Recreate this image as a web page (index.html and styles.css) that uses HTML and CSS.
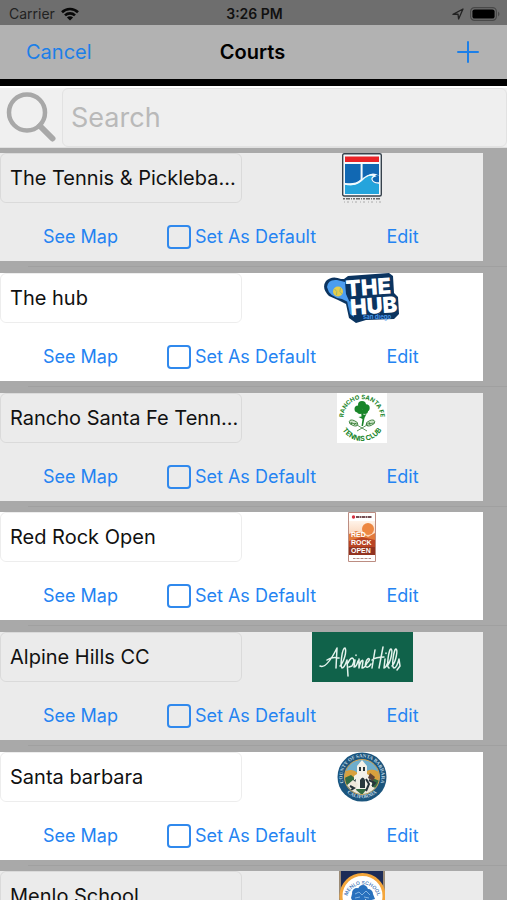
FILE: index.html
```html
<!DOCTYPE html>
<html lang="en">
<head>
<meta charset="utf-8">
<meta name="viewport" content="width=device-width, initial-scale=1">
<title>Courts</title>
<link rel="stylesheet" href="styles.css">
</head>
<body>
<div class="status">
  <div class="status-left">
    <span>Carrier</span>
    <svg width="18" height="14" viewBox="0 0 18 14" aria-hidden="true"><g fill="none" stroke="#080808" stroke-width="2.6"><path d="M1 5.2a11.5 11.5 0 0 1 16 0"/><path d="M4 8.4a7.2 7.2 0 0 1 10 0"/></g><path d="M9 13.6 5.900 10.500a4.400 4.400 0 0 1 6.200 0z" fill="#080808"/></svg>
  </div>
  <time class="clock">3:26 PM</time>
  <div class="status-right">
    <svg width="12" height="12" viewBox="0 0 12 12" aria-hidden="true"><path d="M1 6.400 11 1 6.600 11 6 6.200z" fill="none" stroke="#222" stroke-width="1.300" stroke-linejoin="round"/></svg>
    <svg width="30" height="14" viewBox="0 0 30 14" aria-hidden="true"><rect x=".6" y=".6" width="25.800" height="12.800" rx="4" fill="none" stroke="#494949" stroke-width="1.200"/><rect x="2.400" y="2.400" width="22.200" height="9.200" rx="2.200" fill="#000"/><path d="M28 4.600q3 2.400 0 4.800z" fill="#494949"/></svg>
  </div>
</div>

<header class="nav">
  <button class="cancel" type="button">Cancel</button>
  <h1>Courts</h1>
  <button class="add" type="button" aria-label="Add court"><svg width="22" height="22" viewBox="0 0 22 22"><path d="M11 1v20M1 11h20" stroke="#1c7fe8" stroke-width="2" stroke-linecap="round"/></svg></button>
</header>

<div class="search">
  <label for="search" aria-label="Search"><svg width="50" height="52" viewBox="0 0 50 52"><circle cx="21" cy="20.500" r="18" fill="none" stroke="#a8a8a8" stroke-width="4.500"/><path d="m34 34 12.500 12.500" stroke="#a8a8a8" stroke-width="6" stroke-linecap="round"/></svg></label>
  <input id="search" type="text" placeholder="Search">
</div>

<main class="list">
  <article class="court">
    <div class="top">
      <input class="name" type="text" aria-label="Court name" value="The Tennis &amp; Pickleba..." readonly>
      <svg width="40" height="50" viewBox="0 0 40 50" aria-hidden="true"><rect x=".7" y=".7" width="38.600" height="42.300" rx="1.500" fill="#f4fafd" stroke="#37424c" stroke-width="1.400"/><path d="M3 3.500h34V9H3z" fill="#e92327"/><path d="M3 11h15.600v15.500Q13 31.500 3 30zM20.600 11H37v11.600q-7-4.500-12 .8l-4.400 3.500z" fill="#1168b3"/><path d="M3 31.500c10 2 14-1 19-5.500 4-3.500 7-4.500 11-2-5 1-3 7 4 7V41H3z" fill="#24a4dc"/><path d="M31 24.500c-4 3 1 7 6 6v-8q-4-1.500-6 2" fill="#1168b3"/><path d="M3 31c10 2 14-1 19-6 5-4 8-4 11-2-5 1-4 7 4 7" fill="none" stroke="#eefaff" stroke-width="1.300"/><path d="M1 45.800h38" stroke="#6b6b6b" stroke-width="1.500" stroke-dasharray="2 1 4 1 1 1"/><path d="M2 49h37" stroke="#aaa" stroke-dasharray="1 2 2 3"/></svg>
    </div>
    <div class="actions"><button type="button">See Map</button><label><input type="checkbox">Set As Default</label><button type="button">Edit</button></div>
  </article>

  <article class="court">
    <div class="top">
      <input class="name" type="text" aria-label="Court name" value="The hub" readonly>
      <svg width="78" height="50" viewBox="0 0 78 50" aria-hidden="true"><path d="m21 6 4-3 41-3 4 3 1 17 4 4 1 17-5 5-28 1-10 3-7-5-3-14-8-4-9-4Q-2 15 3 8q6-6 15-2z" fill="#0b3460"/><path d="M4 14q1-8 10-7l8 2 1 12 4 9-8-4Q6 24 4 14" fill="#4b9df0"/><path d="m24 28 3 13 4 3v-15z" fill="#3d8cde"/><circle cx="15" cy="18.500" r="5" fill="#e4cd4b"/><path d="M11.500 16q3.500 2 2 6m4-7q-2 4 1.500 6" fill="none" stroke="#9eb86b"/><g transform="rotate(-4 45 24)" class="hub-text"><text x="46" y="22" text-anchor="middle">THE</text><text x="50" y="41" text-anchor="middle">HUB</text></g><text class="hub-small" x="54" y="46" text-anchor="middle">san diego</text></svg>
    </div>
    <div class="actions"><button type="button">See Map</button><label><input type="checkbox">Set As Default</label><button type="button">Edit</button></div>
  </article>

  <article class="court">
    <div class="top">
      <input class="name" type="text" aria-label="Court name" value="Rancho Santa Fe Tenn..." readonly>
      <svg width="50" height="50" viewBox="0 0 50 50" aria-hidden="true"><path d="M0 0h50v50H0z" fill="#fff"/><defs><path id="ranch-top" d="M8 32a18.500 18.500 0 1 1 34 0"/><path id="ranch-low" d="M2 25a23 23 0 0 0 46 0"/></defs><g class="ranch-text"><text><textPath href="#ranch-top" startOffset="50%" text-anchor="middle">RANCHO SANTA FE</textPath></text><text class="ranch-low"><textPath href="#ranch-low" startOffset="50%" text-anchor="middle">TENNIS CLUB</textPath></text></g><g fill="#198529"><circle cx="21" cy="16" r="3.500"/><circle cx="25" cy="12" r="4"/><circle cx="29" cy="15" r="3.700"/><circle cx="23" cy="18" r="3"/><circle cx="28" cy="18" r="3"/><path d="M24 17h3l-.5 5 3-1-2 4-1.500 8h-1.500l1-7-4-2 3-.5z"/></g><g fill="#cde4c9" stroke="#347b34" stroke-width=".8"><ellipse cx="16.500" cy="30" rx="4.500" ry="2.500" transform="rotate(22 16.500 30)"/><ellipse cx="33.500" cy="30" rx="4.500" ry="2.500" transform="rotate(-22 33.500 30)"/><path d="m20 32 10 6M30 32l-10 6m-7-8 7 1m-5-2-1 3m5-2-2 2m13-1 7-1m-5-1 1 3m-4-1 2 2" fill="none"/></g></svg>
    </div>
    <div class="actions"><button type="button">See Map</button><label><input type="checkbox">Set As Default</label><button type="button">Edit</button></div>
  </article>

  <article class="court">
    <div class="top">
      <input class="name" type="text" aria-label="Court name" value="Red Rock Open" readonly>
      <svg width="28" height="50" viewBox="0 0 28 50" aria-hidden="true"><defs><linearGradient id="sunset" x2="0" y2="1"><stop stop-color="#fff3e9"/><stop offset="1" stop-color="#f4ac79"/></linearGradient></defs><path d="M.5.500h27v49H.5z" fill="#fff" stroke="#bc8d82"/><circle cx="5.500" cy="5" r="1.700" fill="#d52e3f"/><path d="M8 5h16" stroke="#744d52" stroke-width="1.800" stroke-dasharray="3 .5 2 .5"/><path d="M1 9h26v34H1z" fill="url(#sunset)"/><circle cx="20" cy="17" r="6" fill="#ed8742"/><path d="m1 22 7-3 6 2 6 4 7-4v22H1z" fill="#e27a3b"/><path d="m1 29 13-4 13 3v15H1z" fill="#b94424"/><path d="M1 35h26v8H1z" fill="#923320"/><g class="rock-text"><text x="3" y="25">RED</text><text x="3" y="33">ROCK</text><text x="3" y="41">OPEN</text></g><path d="M5 46.500h18" stroke="#ad8983" stroke-dasharray="2 .5 1 .5"/></svg>
    </div>
    <div class="actions"><button type="button">See Map</button><label><input type="checkbox">Set As Default</label><button type="button">Edit</button></div>
  </article>

  <article class="court">
    <div class="top">
      <input class="name" type="text" aria-label="Court name" value="Alpine Hills CC" readonly>
      <svg width="101" height="50" viewBox="0 0 101 50" aria-label="Alpine Hills" role="img"><path d="M0 0h101v50H0z" fill="#10624a"/><g fill="none" stroke="#e4f3ed" stroke-width="1.500" stroke-linecap="round" stroke-linejoin="round"><path d="M8 34c6 3 13-10 17-18l-1 20M15 28c4-3 8-3 12-2M28 34c4-4 7-15 5-18-3 0-5 18-3 20 2 0 4-5 5-8l1 16M36 31c4-9 8-4 4 3l-3 1M43 28l-1 7c2 0 3-2 4-6M44 23v.5M47 27v9c1-6 3-9 4-7l-1 7c3 0 4-3 5-5 5-4 1-7-1-1s2 7 5 2"/><path d="m63 18-3 18M71 15l-4 21M60 28c4-3 8-3 12-3M73 27l-1 9c2 0 3-3 4-6M74 21v.5M75 34c4-4 6-16 4-17s-5 18-2 19M80 34c4-4 6-16 4-17s-5 18-2 19c2 0 4-5 5-9l1 7-3 4"/></g></svg>
    </div>
    <div class="actions"><button type="button">See Map</button><label><input type="checkbox">Set As Default</label><button type="button">Edit</button></div>
  </article>

  <article class="court">
    <div class="top">
      <input class="name" type="text" aria-label="Court name" value="Santa barbara" readonly>
      <svg width="50" height="50" viewBox="0 0 50 50" aria-hidden="true"><defs><path id="county-top" d="M6.500 31a19.500 19.500 0 1 1 37 0"/><path id="county-low" d="M5.500 35a22.500 22.500 0 0 0 39 0"/><clipPath id="county-clip"><circle cx="25" cy="25" r="17"/></clipPath></defs><circle cx="25" cy="25" r="24.500" fill="#1b557d"/><circle cx="25" cy="25" r="17.500" fill="#6eadcc" stroke="#d3a24f"/><g clip-path="url(#county-clip)"><path d="M5 22q6-6 13-3l5 4 5-3q8-6 16 2v21H5z" fill="#d8a13d"/><path d="m5 27 9-4 7 6 10-5 14 6v14H5z" fill="#346c42"/><path d="m20 14 5-6 5 6v8l5 3v12H17V24l3-2z" fill="#f3f1e9"/><path d="M22 15h2v4h-2m4-4h2v4h-2M23 28q3-5 5 0v8h-5M12 32l7-5-2 10-7 2z" fill="#29383d"/><path d="m9 34 7-6 5 4-2 6 6 5 7-9 7 2-3 7H13z" fill="#eee8db"/><path d="m13 34 4 2-3 2m15-11 3 5-3 7m3-11 6 3-3 3" stroke="#26333b" stroke-width="2" fill="none"/><path d="m33 21 5 4-2 4-5-3z" fill="#5e4335"/></g><g class="county-text"><text><textPath href="#county-top" startOffset="50%" text-anchor="middle">COUNTY OF SANTA BARBARA</textPath></text><text><textPath href="#county-low" startOffset="50%" text-anchor="middle">CALIFORNIA</textPath></text></g></svg>
    </div>
    <div class="actions"><button type="button">See Map</button><label><input type="checkbox">Set As Default</label><button type="button">Edit</button></div>
  </article>

  <article class="court">
    <div class="top">
      <input class="name" type="text" aria-label="Court name" value="Menlo School" readonly>
      <svg width="46" height="50" viewBox="0 0 46 50" aria-hidden="true"><defs><path id="menlo-arc" d="M8 29a15.500 15.500 0 1 1 31 0"/></defs><path d="M0 0h46v50H0z" fill="#1d2c57"/><path d="M1 0v50M45 0v50" stroke="#c4a980" stroke-width="1.500"/><circle cx="23.500" cy="25" r="21.500" fill="#fff" stroke="#f4a63b" stroke-width="3"/><g class="menlo-text"><text><textPath href="#menlo-arc" startOffset="50%" text-anchor="middle">MENLO SCHOOL</textPath></text></g><g fill="#2870bd"><circle cx="18" cy="22" r="5"/><circle cx="24" cy="19" r="5"/><circle cx="29" cy="23" r="5"/><path d="M13 23h21l2 5-7 2-3-2 1 12h-6l1-11-8 2-2-4z"/></g><path d="m16 23 4-2 3 3 4-4 4 4m-15 3 5-1m4 0 5 1" stroke="#83b4e2" fill="none"/></svg>
    </div>
    <div class="actions"><button type="button">See Map</button><label><input type="checkbox">Set As Default</label><button type="button">Edit</button></div>
  </article>
</main>
</body>
</html>
```
FILE: styles.css
```css
* { box-sizing: border-box; }
html { height: 100%; overflow: hidden; }
body {
  margin: 0;
  height: 100%;
  overflow: hidden;
  background: #a9a9a9;
  color: #111;
  font-family: Inter, "Liberation Sans", sans-serif;
}
button, input { font: inherit; color: inherit; }
button { padding: 0; border: 0; background: none; }
svg { display: block; flex: none; }

.status {
  display: grid;
  grid-template-columns: 1fr auto 1fr;
  align-items: center;
  height: 25px;
  padding: 2px 7px 0 9px;
  background: #6e6e6e;
  font-size: 14px;
}
.status-left, .status-right { display: flex; align-items: center; gap: 6px; }
.status-left { color: #222; }
.status-right { justify-content: flex-end; }
.clock { font-weight: 600; }

.nav {
  display: grid;
  grid-template-columns: 1fr auto 1fr;
  align-items: center;
  height: 61px;
  padding: 0 28px 0 26px;
  border-bottom: 7px solid #000;
  background: #b2b2b2;
  font-size: 20px;
}
.nav h1 { margin: 0; font-size: 20px; font-weight: 600; color: #000; }
.cancel { justify-self: start; color: #1c7fe8; }
.add { justify-self: end; }

.search {
  display: flex;
  height: 62px;
  padding-top: 2px;
  border-bottom: 1px solid #e0e0e0;
  background: linear-gradient(#fff 2px, #f0f0f0 2px);
}
.search label { display: flex; align-items: center; width: 62px; padding: 0 0 0 6px; flex: none; }
.search input {
  flex: 1;
  min-width: 0;
  padding: 0 8px;
  border: 1px solid #e2e2e2;
  border-radius: 6px;
  background: #efefef;
  font-size: 27px;
}
.search input::placeholder { color: #b9b9b9; opacity: 1; }

.list { display: grid; padding: 5px 0; }
.court { padding-right: 24px; }
.court::after {
  content: "";
  display: block;
  height: 12px;
  margin: 0 -24px 0 28px;
  background: linear-gradient(#a9a9a9 5px, #a0a0a0 5px, #a0a0a0 6px, #a9a9a9 6px);
}
.court:nth-child(3n)::after { height: 11px; }
.top, .actions { background: #fff; }
.court:nth-child(odd) .top, .court:nth-child(odd) .actions { background: #ebebeb; }
.top { display: grid; grid-template-columns: 1fr 1fr; height: 50px; justify-items: center; }
.name {
  width: 100%;
  min-width: 0;
  height: 50px;
  padding: 0 0 0 9px;
  border: 1px solid rgba(0, 0, 0, 0.07);
  border-radius: 6px;
  background: transparent;
  font-size: 20px;
}
.actions {
  display: grid;
  grid-template-columns: 1fr 1fr 1fr;
  justify-items: center;
  align-items: center;
  height: 58px;
  padding-top: 9px;
  color: #2483f2;
  font-size: 18px;
}
.actions label { display: flex; align-items: center; gap: 4px; white-space: nowrap; }
.actions input {
  appearance: none;
  width: 24px;
  height: 24px;
  margin: 0;
  border: 2px solid #3089ed;
  border-radius: 4px;
}
.actions input:checked { background: #3089ed; }

.hub-text { font-size: 22px; font-weight: 900; fill: #fff; }
.hub-small { font-size: 6px; font-weight: 600; fill: #4b9df0; }
.ranch-text { font-size: 6px; font-weight: 700; fill: #198529; }
.ranch-low { font-size: 7px; }
.rock-text { font-family: "Liberation Sans", sans-serif; font-size: 7px; font-weight: 700; fill: #fff; }
.county-text { font-family: "Liberation Serif", serif; font-size: 5px; font-weight: 700; fill: #c3dce8; }
.menlo-text { font-size: 5px; font-weight: 600; fill: #4779b8; }
```
